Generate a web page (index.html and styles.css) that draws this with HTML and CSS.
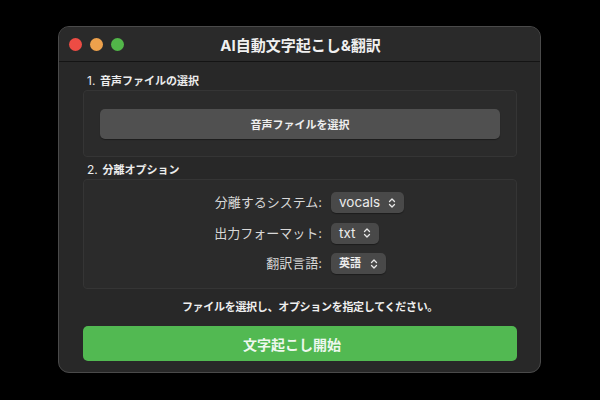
FILE: index.html
```html
<!DOCTYPE html>
<html lang="ja">
<head>
<meta charset="utf-8">
<title>AI自動文字起こし&amp;翻訳</title>
<link rel="stylesheet" href="styles.css">
</head>
<body>
<div class="window">
  <div class="titlebar">
    <div class="lights">
      <span class="light red"></span>
      <span class="light yellow"></span>
      <span class="light green"></span>
    </div>
    <div class="title">AI自動文字起こし&amp;翻訳</div>
  </div>
  <div class="content">
    <div class="section-label"><span class="num">1.</span> 音声ファイルの選択</div>
    <div class="group group-file">
      <button class="btn-file">音声ファイルを選択</button>
    </div>
    <div class="section-label second"><span class="num">2.</span> 分離オプション</div>
    <div class="group group-opts">
      <div class="opt-label">分離するシステム:</div>
      <div class="popup"><span class="popup-text">vocals</span><svg class="chev" viewBox="0 0 8 12" width="8" height="12"><path d="M1.5 4.5 L4 2 L6.5 4.5 M1.5 7.5 L4 10 L6.5 7.5" fill="none" stroke="#e8e8e8" stroke-width="1.3" stroke-linecap="round" stroke-linejoin="round"/></svg></div>
      <div class="opt-label">出力フォーマット:</div>
      <div class="popup"><span class="popup-text">txt</span><svg class="chev" viewBox="0 0 8 12" width="8" height="12"><path d="M1.5 4.5 L4 2 L6.5 4.5 M1.5 7.5 L4 10 L6.5 7.5" fill="none" stroke="#e8e8e8" stroke-width="1.3" stroke-linecap="round" stroke-linejoin="round"/></svg></div>
      <div class="opt-label">翻訳言語:</div>
      <div class="popup"><span class="popup-text cjk">英語</span><svg class="chev" viewBox="0 0 8 12" width="8" height="12"><path d="M1.5 4.5 L4 2 L6.5 4.5 M1.5 7.5 L4 10 L6.5 7.5" fill="none" stroke="#e8e8e8" stroke-width="1.3" stroke-linecap="round" stroke-linejoin="round"/></svg></div>
    </div>
    <div class="status">ファイルを選択し、オプションを指定してください。</div>
    <button class="btn-start">文字起こし開始</button>
  </div>
</div>
</body>
</html>
```
FILE: styles.css
```css
* { box-sizing: border-box; }
html, body {
  margin: 0;
  padding: 0;
  background: #000;
  width: 600px;
  height: 400px;
  overflow: hidden;
}
body {
  font-family: Inter, "Noto Sans CJK JP", sans-serif;
  color: #e6e6e6;
  padding: 26px 0 0 58px;
}
.window {
  width: 483px;
  height: 347px;
  background: #282828;
  border: 1px solid #4a4a4a;
  border-radius: 11px;
  overflow: hidden;
  display: flex;
  flex-direction: column;
}
.titlebar {
  height: 35px;
  flex: none;
  border-bottom: 1px solid #141414;
  background: #2a2a2a;
  display: flex;
  align-items: center;
  position: relative;
}
.lights {
  display: flex;
  gap: 8px;
  padding-left: 10px;
}
.light {
  width: 13px;
  height: 13px;
  border-radius: 50%;
  display: block;
}
.red { background: #ed4c44; }
.yellow { background: #eda14c; }
.green { background: #52b649; }
.title {
  position: absolute;
  left: 0;
  right: 0;
  top: 0;
  bottom: 0;
  display: flex;
  align-items: center;
  justify-content: center;
  font-weight: 700;
  font-size: 15px;
  color: #f0f0f0;
  padding-left: 2px;
}
.content {
  padding: 11px 23px 11px 24px;
  display: flex;
  flex-direction: column;
}
.section-label {
  height: 16px;
  line-height: 16px;
  font-size: 11px;
  font-weight: 700;
  color: #ececec;
  padding-left: 4px;
  margin-bottom: 1px;
}
.section-label.second { margin-top: 5px; }
.section-label .num { font-weight: 400; font-size: 12px; margin-right: 2px; }
.group {
  border: 1px solid #353535;
  background: #2b2b2b;
  border-radius: 4px;
}
.group-file {
  height: 67px;
  padding: 18px 16px 0 16px;
}
.btn-file {
  display: block;
  width: 100%;
  height: 30px;
  border: none;
  border-radius: 5px;
  background: #505050;
  color: #eeeeee;
  font-family: Inter, "Noto Sans CJK JP", sans-serif;
  font-size: 11px;
  font-weight: 700;
  padding: 0;
  box-shadow: 0 1px 1px rgba(0,0,0,0.35);
}
.group-opts {
  height: 110px;
  padding-top: 12px;
  display: grid;
  grid-template-columns: 238px auto;
  column-gap: 9px;
  row-gap: 9.5px;
  align-content: start;
  justify-content: start;
  justify-items: start;
}
.opt-label {
  justify-self: end;
  font-family: Inter, "Noto Sans CJK JP", sans-serif;
  font-size: 13px;
  line-height: 21px;
  color: #d8d8d8;
}
.popup {
  height: 21px;
  border-radius: 5px;
  background: #494949;
  display: flex;
  align-items: center;
  gap: 8px;
  padding: 0 8px 0 8px;
  box-shadow: 0 1px 1px rgba(0,0,0,0.35);
}
.popup-text {
  font-size: 13.5px;
  color: #ececec;
  line-height: 21px;
}
.popup-text.cjk {
  font-size: 11px;
  font-weight: 700;
  padding-right: 1px;
}
.chev { display: block; }
.status {
  margin-top: 10px;
  height: 16px;
  line-height: 16px;
  text-align: center;
  font-size: 11px;
  font-weight: 700;
  letter-spacing: -0.3px;
  color: #efefef;
  padding-left: 20px;
}
.btn-start {
  margin-top: 11px;
  height: 35px;
  width: 100%;
  border: none;
  border-radius: 5px;
  background: #52b952;
  color: #eef7ee;
  font-family: Inter, "Noto Sans CJK JP", sans-serif;
  font-size: 14px;
  font-weight: 700;
  padding: 0 16px 0 0;
}
```
